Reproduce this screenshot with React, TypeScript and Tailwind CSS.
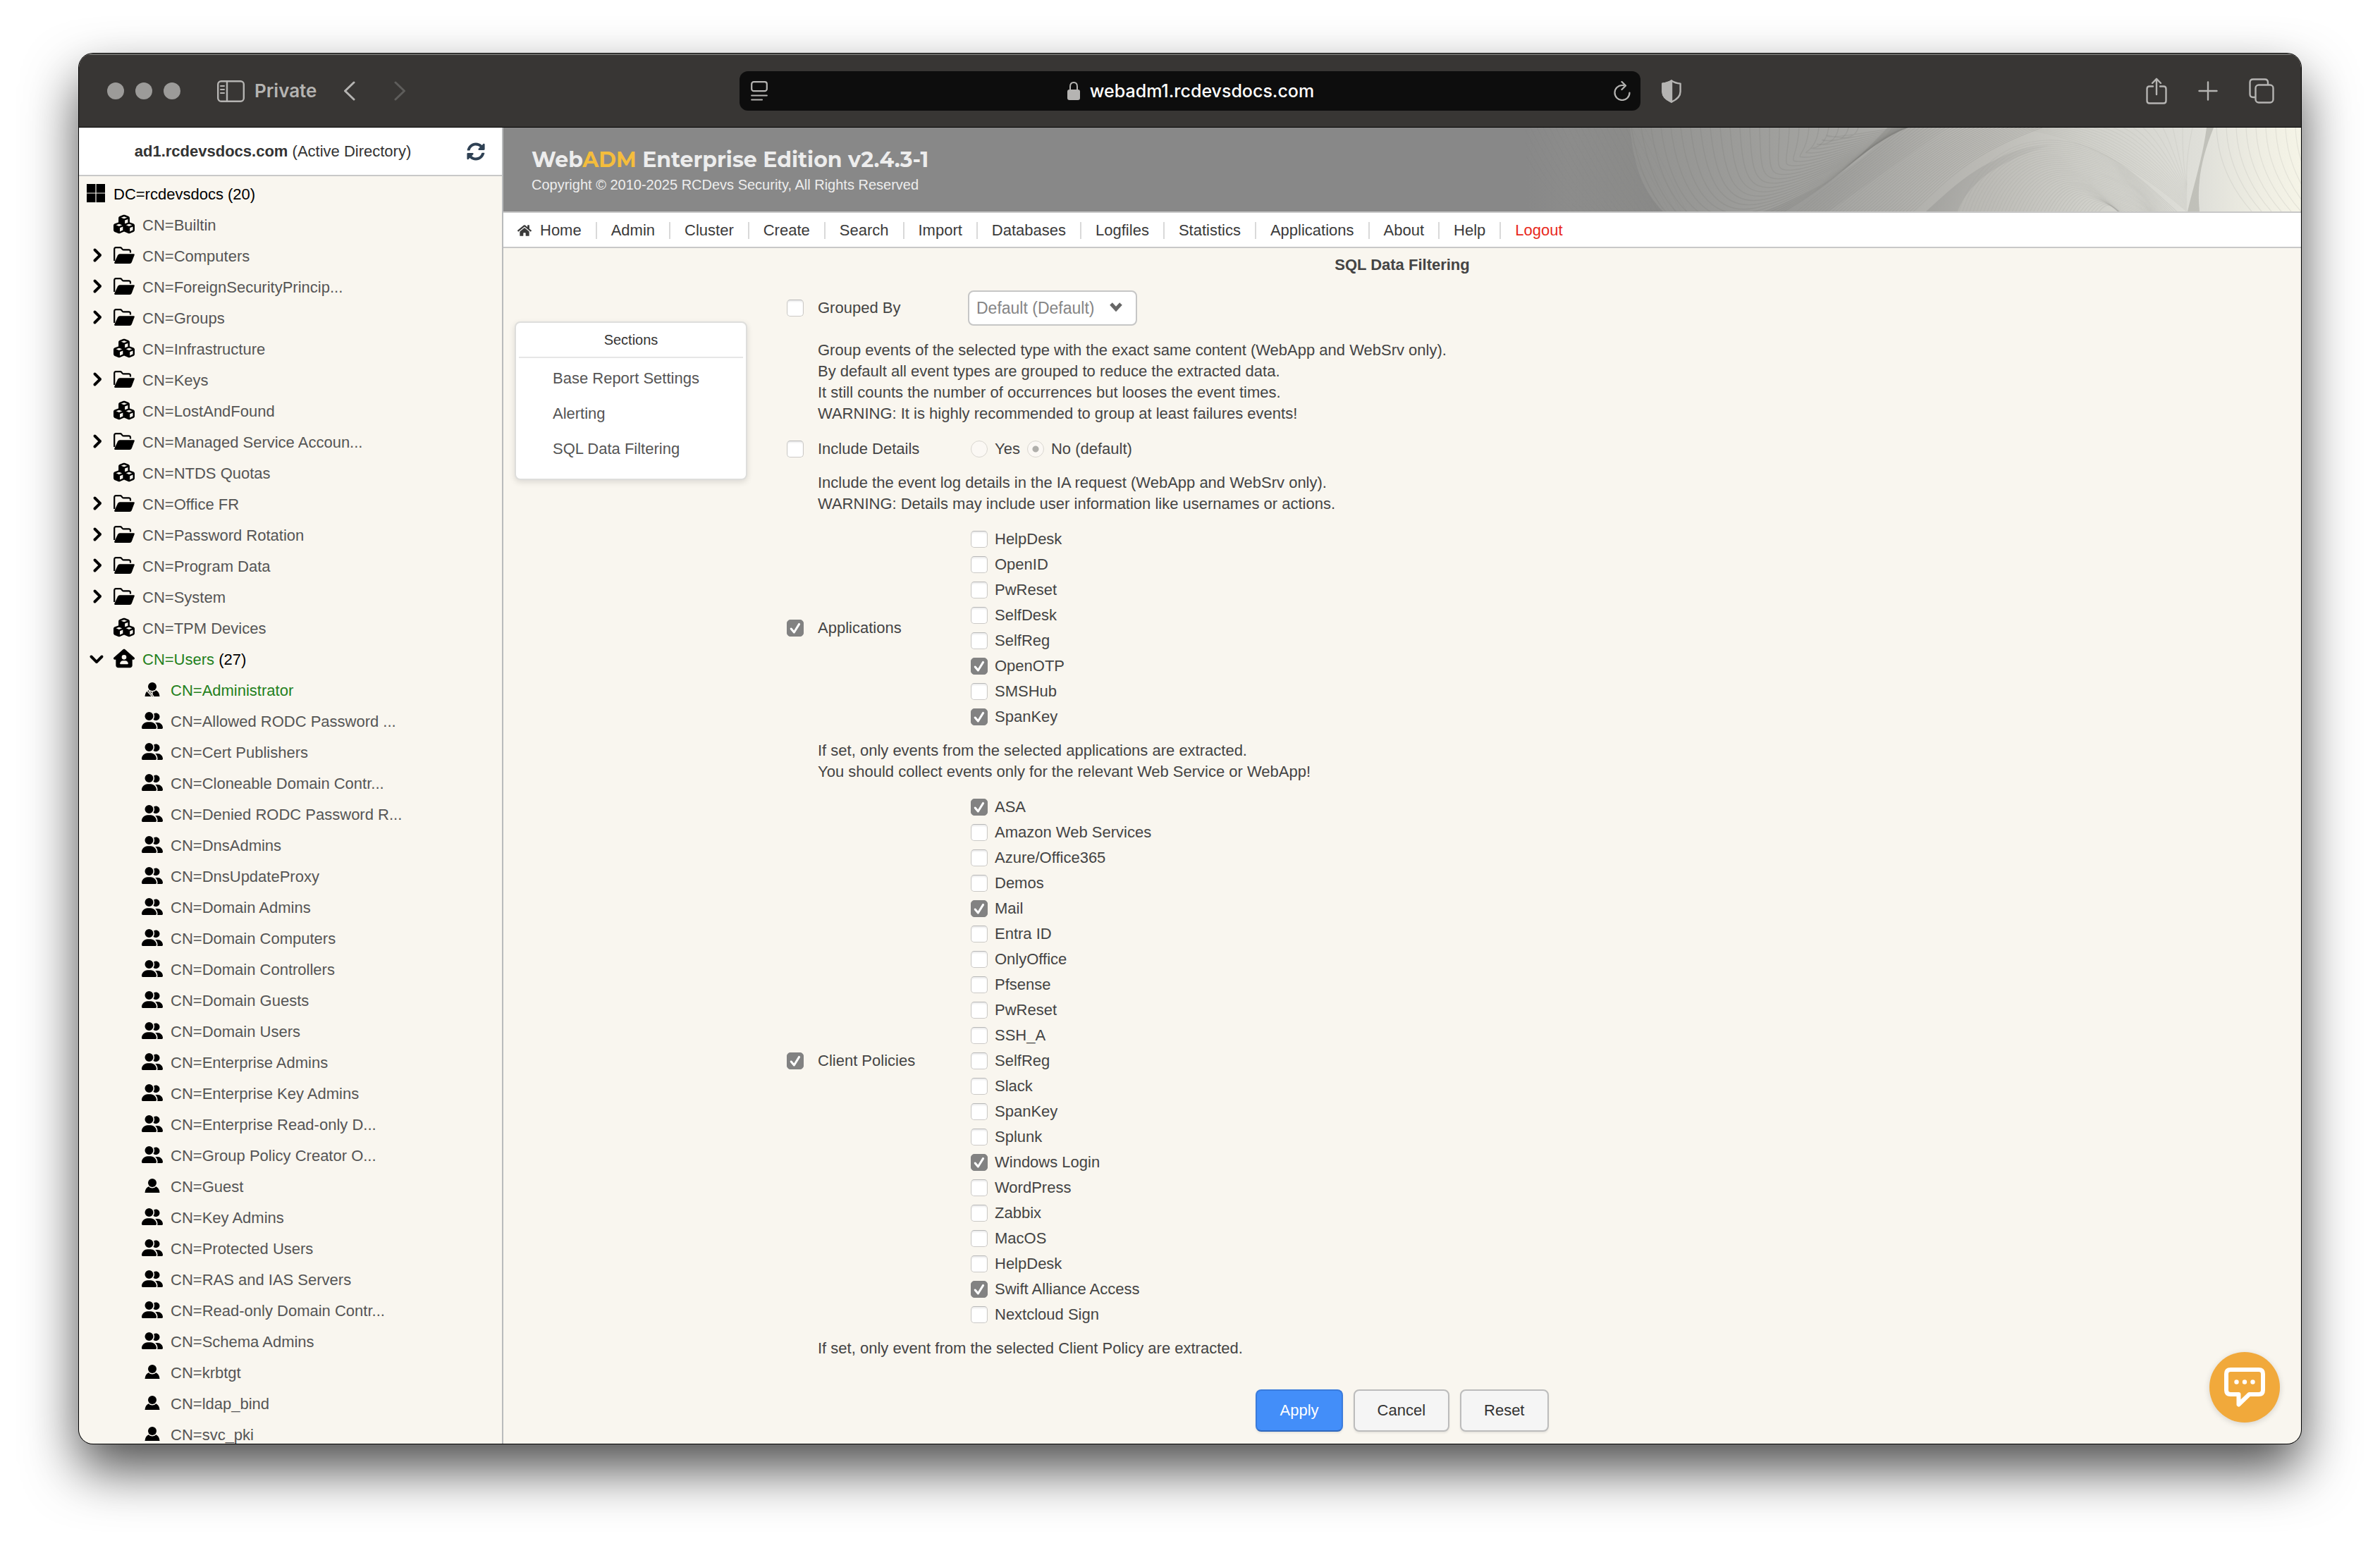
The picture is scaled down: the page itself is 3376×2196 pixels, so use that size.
import React from "react";
import { FaHome, FaSyncAlt } from "react-icons/fa";
import { FaChevronDown, FaChevronRight, FaCubes, FaHouseUser, FaUserGroup } from "react-icons/fa6";

type TreeIcon = "root" | "cubes" | "folder" | "home" | "admin" | "group" | "user";

const containers: { name: string; icon: TreeIcon }[] = [
  { name: "Builtin", icon: "cubes" },
  { name: "Computers", icon: "folder" },
  { name: "ForeignSecurityPrincip...", icon: "folder" },
  { name: "Groups", icon: "folder" },
  { name: "Infrastructure", icon: "cubes" },
  { name: "Keys", icon: "folder" },
  { name: "LostAndFound", icon: "cubes" },
  { name: "Managed Service Accoun...", icon: "folder" },
  { name: "NTDS Quotas", icon: "cubes" },
  { name: "Office FR", icon: "folder" },
  { name: "Password Rotation", icon: "folder" },
  { name: "Program Data", icon: "folder" },
  { name: "System", icon: "folder" },
  { name: "TPM Devices", icon: "cubes" },
];

const users: { name: string; icon: TreeIcon }[] = [
  { name: "Administrator", icon: "admin" },
  { name: "Allowed RODC Password ...", icon: "group" },
  { name: "Cert Publishers", icon: "group" },
  { name: "Cloneable Domain Contr...", icon: "group" },
  { name: "Denied RODC Password R...", icon: "group" },
  { name: "DnsAdmins", icon: "group" },
  { name: "DnsUpdateProxy", icon: "group" },
  { name: "Domain Admins", icon: "group" },
  { name: "Domain Computers", icon: "group" },
  { name: "Domain Controllers", icon: "group" },
  { name: "Domain Guests", icon: "group" },
  { name: "Domain Users", icon: "group" },
  { name: "Enterprise Admins", icon: "group" },
  { name: "Enterprise Key Admins", icon: "group" },
  { name: "Enterprise Read-only D...", icon: "group" },
  { name: "Group Policy Creator O...", icon: "group" },
  { name: "Guest", icon: "user" },
  { name: "Key Admins", icon: "group" },
  { name: "Protected Users", icon: "group" },
  { name: "RAS and IAS Servers", icon: "group" },
  { name: "Read-only Domain Contr...", icon: "group" },
  { name: "Schema Admins", icon: "group" },
  { name: "krbtgt", icon: "user" },
  { name: "ldap_bind", icon: "user" },
  { name: "svc_pki", icon: "user" },
];

const menu = [
  "Home", "Admin", "Cluster", "Create", "Search", "Import", "Databases",
  "Logfiles", "Statistics", "Applications", "About", "Help", "Logout",
];

const applications = ["HelpDesk", "OpenID", "PwReset", "SelfDesk", "SelfReg", "OpenOTP", "SMSHub", "SpanKey"];

const policies = [
  "ASA", "Amazon Web Services", "Azure/Office365", "Demos", "Mail", "Entra ID", "OnlyOffice",
  "Pfsense", "PwReset", "SSH_A", "SelfReg", "Slack", "SpanKey", "Splunk", "Windows Login",
  "WordPress", "Zabbix", "MacOS", "HelpDesk", "Swift Alliance Access", "Nextcloud Sign",
];

const NodeIcon = ({ icon }: { icon: TreeIcon }) => {
  switch (icon) {
    case "root":
      return (
        <svg viewBox="0 0 26 26" className="size-[26px]">
          <path d="M0 0h12.4v12.4H0zM13.6 0H26v12.4H13.6zM0 13.6h12.4V26H0zM13.6 13.6H26V26H13.6z" />
        </svg>
      );
    case "cubes":
      return <FaCubes className="size-[30px]" />;
    case "folder":
      return (
        <svg viewBox="0 0 30 24" className="h-6 w-[30px]">
          <path d="M1.2 20V3.4Q1.2 1.2 3.4 1.2H9.6Q10.6 1.2 11.3 2L12.6 3.6Q13.3 4.4 14.4 4.4H21.6Q24 4.4 24 6.8V8.6" fill="none" stroke="#000" strokeWidth="2.2" />
          <path d="M9 10.2H28.6Q30.3 10.2 29.7 11.8L25.8 22Q25 24 23 24H2.6Q0.6 24 1.4 22L6 12.2Q7 10.2 9 10.2Z" />
        </svg>
      );
    case "home":
      return <FaHouseUser className="h-7 w-[30px]" />;
    case "group":
      return <FaUserGroup className="size-[30px]" />;
    default:
      return (
        <svg viewBox="0 0 22 20" className="h-5 w-[22px]">
          <circle cx="11" cy="6" r="6" />
          <path d="M0.5 20Q1 13.5 5.6 11.2Q8 13.4 11 13.4Q14 13.4 16.4 11.2Q21 13.5 21.5 20Z" />
          {icon === "admin" && (
            <path d="M3.6 12.2L10.6 20M6.2 12L13 20M11 13V17" fill="none" stroke="#f9f6ef" strokeWidth="1.3" />
          )}
        </svg>
      );
  }
};

const Leaf = ({ name, icon }: { name: string; icon: TreeIcon }) => (
  <li className="flex h-11 items-center">
    <span className="flex w-[30px] justify-center pb-1">
      <NodeIcon icon={icon} />
    </span>
    <a href="#" className={icon === "admin" ? "ml-[11px] text-[#23801c]" : "ml-[11px]"}>CN={name}</a>
  </li>
);

const Sidebar = () => (
  <aside className="flex w-[602px] shrink-0 flex-col border-r-2 border-[#b9bbbc]">
    <div className="flex h-[69px] shrink-0 items-center border-b-2 border-[#c8c8c8] bg-white pr-6 text-[#333]">
      <p className="flex-1 text-center">
        <b>ad1.rcdevsdocs.com</b> (Active Directory)
      </p>
      <button type="button" aria-label="Refresh tree">
        <FaSyncAlt className="size-[26px] text-[#2f4154]" />
      </button>
    </div>
    <nav aria-label="Directory tree" className="pt-1 text-[#555]">
      <div className="flex h-11 items-center pl-[11px] text-black">
        <span className="pb-1"><NodeIcon icon="root" /></span>
        <a href="#" className="ml-3">DC=rcdevsdocs (20)</a>
      </div>
      <ul>
        {containers.map((node) => (
          <li key={node.name} className="flex items-center text-black">
            <span className="flex w-[49px] justify-center pb-1">
              {node.icon === "folder" && <FaChevronRight className="size-5 stroke-black stroke-[36px]" />}
            </span>
            <ul className="text-[#555] [&_svg]:text-black">
              <Leaf name={node.name} icon={node.icon} />
            </ul>
          </li>
        ))}
        <li>
          <div className="flex h-11 items-center text-black">
            <span className="flex w-[49px] justify-center pb-1">
              <FaChevronDown className="size-5 stroke-black stroke-[36px]" />
            </span>
            <span className="pb-1"><NodeIcon icon="home" /></span>
            <a href="#" className="ml-[11px]">
              <span className="text-[#23801c]">CN=Users</span> (27)
            </a>
          </div>
          <ul className="pl-[89px] [&_svg]:text-black">
            {users.map((node) => (
              <Leaf key={node.name} name={node.name} icon={node.icon} />
            ))}
          </ul>
        </li>
      </ul>
    </nav>
  </aside>
);

const range = (n: number) => Array.from({ length: n }, (_, i) => i);

const HeaderWaves = () => (
  <svg viewBox="0 0 1100 119" preserveAspectRatio="xMaxYMid slice" className="h-full w-[1100px]" fill="none" aria-hidden="true">
    <defs>
      <linearGradient id="base" x1="0" x2="1" y1="0" y2="0">
        <stop offset="0" stopColor="#888888" />
        <stop offset="0.13" stopColor="#91918f" />
        <stop offset="0.4" stopColor="#a5a5a2" />
        <stop offset="0.6" stopColor="#bcbbb6" />
        <stop offset="0.72" stopColor="#cfcfc9" />
        <stop offset="0.87" stopColor="#dfdfd9" />
        <stop offset="0.95" stopColor="#efeee3" />
        <stop offset="1" stopColor="#f5f4e7" />
      </linearGradient>
      <linearGradient id="foldA" x1="0" x2="1" y1="0" y2="0">
        <stop offset="0" stopColor="#777" stopOpacity="0" />
        <stop offset="1" stopColor="#777" stopOpacity="0.4" />
      </linearGradient>
      <linearGradient id="foldB" x1="0" x2="1" y1="0" y2="0.3">
        <stop offset="0" stopColor="#8a8a88" stopOpacity="0.5" />
        <stop offset="1" stopColor="#8a8a88" stopOpacity="0" />
      </linearGradient>
    </defs>
    <rect width="1100" height="119" fill="url(#base)" />
    <path d="M60 0H148C154 50 162 85 195 119H60Z" fill="url(#foldA)" />
    <path d="M520 0H600L430 119H340C430 80 480 50 520 0Z" fill="url(#foldB)" />
    <path d="M568 119C610 80 635 60 666 46C700 28 720 26 750 24C690 40 630 70 613 119Z" fill="url(#foldB)" />
    <path d="M966 0H976C958 45 952 80 956 119H939C948 80 960 45 966 0Z" fill="#b3b3ad" fillOpacity="0.7" />
    <g stroke="#7f7f7d" strokeOpacity="0.26">
      {range(22).map((i) => (
        <path key={i} d={`M${-20 + i * 9} 0C${i * 9} 40 ${20 + i * 9} 80 ${60 + i * 8} 119`} strokeOpacity="0.1" />
      ))}
      {range(24).map((i) => (
        <path
          key={i}
          strokeWidth="1.4"
          d={`M${150 + i * 14} 0C${165 + i * 13} ${96 - i * 3} ${215 + i * 9} ${168 - i * 7} ${290 + i * 6} ${150 - i * 6}S${450 + i * 3} ${70 - i * 3} ${520 + i * 2} ${-6}`}
        />
      ))}
      {range(34).map((i) => (
        <path key={i} d={`M${385 + i * 5} 119C${430 + i * 5} 80 ${490 + i * 4} 40 ${535 + i * 6} 0`} stroke="#8b8b88" strokeOpacity="0.3" />
      ))}
    </g>
    <g stroke="#a3a39e" strokeOpacity="0.22" strokeWidth="1.2">
      {range(40).map((i) => (
        <path
          key={i}
          d={`M${613 + i * 5} ${125}C${628 + i * 5} ${70 + i} ${670 + i * 4} ${20 + i * 2} ${740 + i * 3} ${18 + i * 3}S${860 + i * 2} ${60 + i * 2} ${930 - i} ${125 + i * 3}`}
        />
      ))}
      {range(20).map((i) => (
        <path key={i} d={`M${680 + i * 14} 0C${770 + i * 9} ${4 + i} ${860 + i * 4} 50 ${938} ${119 - i * 2}`} strokeOpacity="0.14" />
      ))}
      {range(14).map((i) => (
        <path key={i} d={`M${980 + i * 14} 0C${982 + i * 14} 45 ${1000 + i * 14} 85 ${1030 + i * 14} 119`} strokeOpacity="0.2" />
      ))}
    </g>
  </svg>
);

const Header = () => (
  <header>
    <div className="flex h-[121px] justify-between overflow-hidden border-b-2 border-[#c8c8c8] bg-[#888]">
      <div className="shrink-0 pt-[27px] pl-10 text-[#ededed]">
        <h1 className="font-['Montserrat','Inter',sans-serif] text-[30px] leading-[38px] font-bold">
          Web<span className="text-[#f4bd3c]">ADM</span> Enterprise Edition v2.4.3-1
        </h1>
        <p className="text-[20px] leading-8">Copyright © 2010-2025 RCDevs Security, All Rights Reserved</p>
      </div>
      <HeaderWaves />
    </div>
    <nav aria-label="Main menu" className="flex h-[50px] items-center border-b-2 border-[#c8c8c8] bg-white pt-px text-[#3a3a3a]">
      <FaHome className="ml-[20px] size-5" />
      <ul className="-ml-2 flex">
        {menu.map((item) => (
          <li key={item} className="border-r-2 border-[#d9d9d9] px-5 leading-6 last:border-0">
            <a href="#" className={item === "Logout" ? "text-[#e8291c]" : ""}>{item}</a>
          </li>
        ))}
      </ul>
    </nav>
  </header>
);

const Checkbox = ({ id, checked = false }: { id: string; checked?: boolean }) => (
  <span className="relative flex size-6 shrink-0">
    <input
      id={id}
      type="checkbox"
      defaultChecked={checked}
      className="peer size-6 appearance-none rounded-[5px] border border-[#cbc9c6] border-t-[#b8b8b8] bg-white shadow-[inset_0_2px_2px_#ececec] checked:border-[#828282] checked:bg-[#828282] checked:shadow-none"
    />
    <svg viewBox="0 0 24 24" className="pointer-events-none absolute inset-0 hidden peer-checked:block" fill="none" stroke="#fff" strokeWidth="3" strokeLinecap="round" strokeLinejoin="round">
      <path d="M6.2 13L10.4 18L17.6 6.4" />
    </svg>
  </span>
);

const Options = ({ group, items, selected }: { group: string; items: string[]; selected: string[] }) => (
  <ul className="pl-1">
    {items.map((item) => (
      <li key={item} className="flex h-9 items-center gap-2.5">
        <Checkbox id={`${group}-${item}`} checked={selected.includes(item)} />
        <label htmlFor={`${group}-${item}`}>{item}</label>
      </li>
    ))}
  </ul>
);

const Setting = ({ id, label, checked, help, children }: {
  id: string;
  label: string;
  checked?: boolean;
  help: string[];
  children: React.ReactNode;
}) => (
  <section>
    <div className="grid grid-cols-[44px_213px_1fr] items-center">
      <Checkbox id={id} checked={checked} />
      <label htmlFor={id}>{label}</label>
      {children}
    </div>
    <div className="pt-[15px] pb-[17px] pl-11 leading-[30px]">
      {help.map((line) => (
        <p key={line}>{line}</p>
      ))}
    </div>
  </section>
);

const radioClass =
  "size-6 appearance-none rounded-full border border-[#d9d6d0] bg-[#fbf8f4] checked:bg-[radial-gradient(circle,#b0afab_4px,transparent_5px)]";

const SettingsForm = () => (
  <form className="pt-[7px]">
    <Setting
      id="grouped"
      label="Grouped By"
      help={[
        "Group events of the selected type with the exact same content (WebApp and WebSrv only).",
        "By default all event types are grouped to reduce the extracted data.",
        "It still counts the number of occurrences but looses the event times.",
        "WARNING: It is highly recommended to group at least failures events!",
      ]}
    >
      <div className="relative flex h-[60px] w-60 items-center">
        <select
          aria-label="Grouped By"
          disabled
          className="h-[50px] w-full appearance-none rounded-lg border-2 border-[#c6c6c6] bg-white pl-2.5 text-[23px] text-[#858585] opacity-100"
        >
          <option>Default (Default)</option>
        </select>
        <svg viewBox="0 0 18 14" className="pointer-events-none absolute top-[22px] right-[21px] h-[14px] w-[18px]" fill="none" stroke="#666" strokeWidth="5">
          <path d="M2 2L9 9.5L16 2" />
        </svg>
      </div>
    </Setting>
    <Setting
      id="details"
      label="Include Details"
      help={[
        "Include the event log details in the IA request (WebApp and WebSrv only).",
        "WARNING: Details may include user information like usernames or actions.",
      ]}
    >
      <div className="flex h-9 items-center gap-2.5 pl-1">
        <input id="details-yes" name="details-value" type="radio" disabled className={radioClass} />
        <label htmlFor="details-yes">Yes</label>
        <input id="details-no" name="details-value" type="radio" disabled defaultChecked className={radioClass} />
        <label htmlFor="details-no">No (default)</label>
      </div>
    </Setting>
    <Setting
      id="applications"
      label="Applications"
      checked
      help={[
        "If set, only events from the selected applications are extracted.",
        "You should collect events only for the relevant Web Service or WebApp!",
      ]}
    >
      <Options group="app" items={applications} selected={["OpenOTP", "SpanKey"]} />
    </Setting>
    <Setting
      id="policies"
      label="Client Policies"
      checked
      help={["If set, only event from the selected Client Policy are extracted."]}
    >
      <Options group="policy" items={policies} selected={["ASA", "Mail", "Windows Login", "Swift Alliance Access"]} />
    </Setting>
  </form>
);

const Sections = () => (
  <nav aria-label="Sections" className="mt-14 ml-4 h-[225px] w-[330px] shrink-0 rounded-lg border-2 border-[#dededc] bg-white px-1 shadow-[0_3px_8px_#0000001f]">
    <h3 className="border-b-2 border-[#e6e6e6] pt-[9px] pb-[9px] text-center text-[20px] leading-[30px] text-[#333]">Sections</h3>
    <ul className="pt-1 pl-12 leading-[50px] text-[#555]">
      <li><a href="#">Base Report Settings</a></li>
      <li><a href="#">Alerting</a></li>
      <li><a href="#">SQL Data Filtering</a></li>
    </ul>
  </nav>
);

const buttonClass = "h-[60px] rounded-lg border-2 px-8 shadow-[0_2px_3px_#00000014]";

const Toolbar = () => (
  <div className="grid h-[105px] shrink-0 grid-cols-[11fr_15fr_11fr] items-center border-t-2 border-b border-t-[#6d6d6a] border-b-black bg-[#383634] text-[#b5b4b2]">
    <div className="flex items-center pl-10">
      <div className="flex gap-4">
        <span className="size-6 rounded-full bg-[#9c9b99]" />
        <span className="size-6 rounded-full bg-[#9c9b99]" />
        <span className="size-6 rounded-full bg-[#9c9b99]" />
      </div>
      <button type="button" aria-label="Toggle sidebar" className="ml-[52px]">
        <svg viewBox="0 0 39 31" className="h-[31px] w-[39px]" fill="none" stroke="currentColor" strokeWidth="2.4">
          <rect x="1.2" y="1.2" width="36.6" height="28.6" rx="4.5" />
          <path d="M14 1V30" />
          <path d="M5 8H10M5 13H10M5 18H10" strokeWidth="2" strokeLinecap="round" />
        </svg>
      </button>
      <span className="ml-[14px] font-['Inter',sans-serif] text-[26px] font-semibold">Private</span>
      <button type="button" aria-label="Back" className="ml-[38px]">
        <svg viewBox="0 0 17 28" className="h-7 w-[17px]" fill="none" stroke="currentColor" strokeWidth="3" strokeLinecap="round" strokeLinejoin="round">
          <path d="M15 2L2.5 14L15 26" />
        </svg>
      </button>
      <button type="button" aria-label="Forward" className="ml-[55px] text-[#5e5d5b]">
        <svg viewBox="0 0 17 28" className="h-7 w-[17px]" fill="none" stroke="currentColor" strokeWidth="3" strokeLinecap="round" strokeLinejoin="round">
          <path d="M2 2L14.5 14L2 26" />
        </svg>
      </button>
    </div>
    <div className="flex h-14 items-center rounded-xl bg-[#0d0d0d] pr-[14px] pl-4">
      <svg viewBox="0 0 24 28" className="h-7 w-6" fill="none" stroke="currentColor" strokeWidth="2.2" strokeLinecap="round">
        <rect x="1.2" y="1.2" width="21.6" height="13" rx="3" />
        <path d="M1.2 20.5H22.8M1.2 26.5H16" />
      </svg>
      <p className="flex flex-1 items-center justify-center gap-3.5 font-['Inter',sans-serif] text-[25px] font-medium text-white">
        <svg viewBox="0 0 18 26" className="h-[26px] w-[18px] text-[#b5b4b2]" fill="none" stroke="currentColor" strokeWidth="2">
          <path d="M4 12V7Q4 1 9 1T14 7V12" />
          <rect x="0" y="11" width="18" height="15" rx="3" fill="currentColor" stroke="none" />
        </svg>
        webadm1.rcdevsdocs.com
      </p>
      <button type="button" aria-label="Reload">
        <svg viewBox="0 0 24 28" className="h-7 w-6" fill="none" stroke="currentColor" strokeWidth="2.2" strokeLinecap="round" strokeLinejoin="round">
          <path d="M14 6.2Q12.8 6 12 6A10.5 10.5 0 1 0 22.5 16.5" />
          <path d="M11.5 1L17 6.5L11.5 12" />
        </svg>
      </button>
    </div>
    <div className="flex items-center justify-between pr-[38px] pl-[30px]">
      <svg viewBox="0 0 28 33" className="h-[33px] w-7" fill="none" stroke="currentColor" strokeWidth="2.4" strokeLinejoin="round">
        <path d="M14 1.4Q19 4.8 26.6 5.6V17Q26.6 26 14 31.6Q1.4 26 1.4 17V5.6Q9 4.8 14 1.4Z" />
        <path d="M14 1.4Q9 4.8 1.4 5.6V17Q1.4 26 14 31.6Z" fill="currentColor" />
      </svg>
      <div className="flex items-center gap-11">
        <button type="button" aria-label="Share">
          <svg viewBox="0 0 30 38" className="h-[38px] w-[30px]" fill="none" stroke="currentColor" strokeWidth="2.4" strokeLinecap="round" strokeLinejoin="round">
            <path d="M10 12.5H5Q1.5 12.5 1.5 16V33Q1.5 36.5 5 36.5H25Q28.5 36.5 28.5 33V16Q28.5 12.5 25 12.5H20" />
            <path d="M15 24V2M9 8L15 1.8L21 8" />
          </svg>
        </button>
        <button type="button" aria-label="New tab">
          <svg viewBox="0 0 28 28" className="size-7" fill="none" stroke="currentColor" strokeWidth="2.4" strokeLinecap="round">
            <path d="M14 1.5V26.5M1.5 14H26.5" />
          </svg>
        </button>
        <button type="button" aria-label="Tab overview">
          <svg viewBox="0 0 36 36" className="size-9" fill="none" stroke="currentColor" strokeWidth="2.4" strokeLinejoin="round">
            <rect x="9.5" y="9.5" width="25" height="25" rx="4.5" />
            <path d="M9.5 27H6Q1.5 27 1.5 22.5V6Q1.5 1.5 6 1.5H22.5Q27 1.5 27 6V9.5" />
          </svg>
        </button>
      </div>
    </div>
  </div>
);

const App = () => {
  return (
    <div className="flex h-screen bg-white px-28 pt-[76px] pb-[148px] font-['Liberation_Sans',Arial,sans-serif] text-[22px] leading-[30px]">
      <div className="relative flex min-w-0 flex-1 flex-col overflow-hidden rounded-[20px] bg-[#f9f6ef] shadow-[0_0_0_1px_#000,0_36px_76px_#000000b3]">
        <Toolbar />
        <div className="flex min-h-0 flex-1">
          <Sidebar />
          <main className="min-w-0 flex-1 text-[#444]">
            <Header />
            <h2 className="text-center leading-[48px] font-bold">SQL Data Filtering</h2>
            <div className="flex gap-14">
              <Sections />
              <SettingsForm />
            </div>
            <div className="flex justify-center gap-[15px] pt-[26px]">
              <button type="submit" className={`${buttonClass} border-[#3a7bdc] border-b-[#2f68bd] bg-[#438ef9] text-white`}>Apply</button>
              <button type="button" className={`${buttonClass} border-[#bcbcbc] bg-[#f5f5f5] text-[#333]`}>Cancel</button>
              <button type="reset" className={`${buttonClass} border-[#bcbcbc] bg-[#f5f5f5] text-[#333]`}>Reset</button>
            </div>
          </main>
        </div>
        <button
          type="button"
          aria-label="Open chat"
          className="absolute right-[30px] bottom-[30px] flex size-[100px] items-center justify-center rounded-full bg-[#f1a93b] shadow-[0_2px_8px_#00000026]"
        >
          <svg viewBox="0 0 58 56" className="h-14 w-[58px]" fill="none" stroke="#fff" strokeWidth="6" strokeLinejoin="round">
            <path d="M9 3H49Q55 3 55 9V32Q55 38 49 38H35.5L20.5 52.5V38H9Q3 38 3 32V9Q3 3 9 3Z" />
            <g fill="#fff" stroke="none">
              <circle cx="17.5" cy="20.5" r="3.2" />
              <circle cx="29" cy="20.5" r="3.2" />
              <circle cx="40.5" cy="20.5" r="3.2" />
            </g>
          </svg>
        </button>
      </div>
    </div>
  );
};

export default App;
